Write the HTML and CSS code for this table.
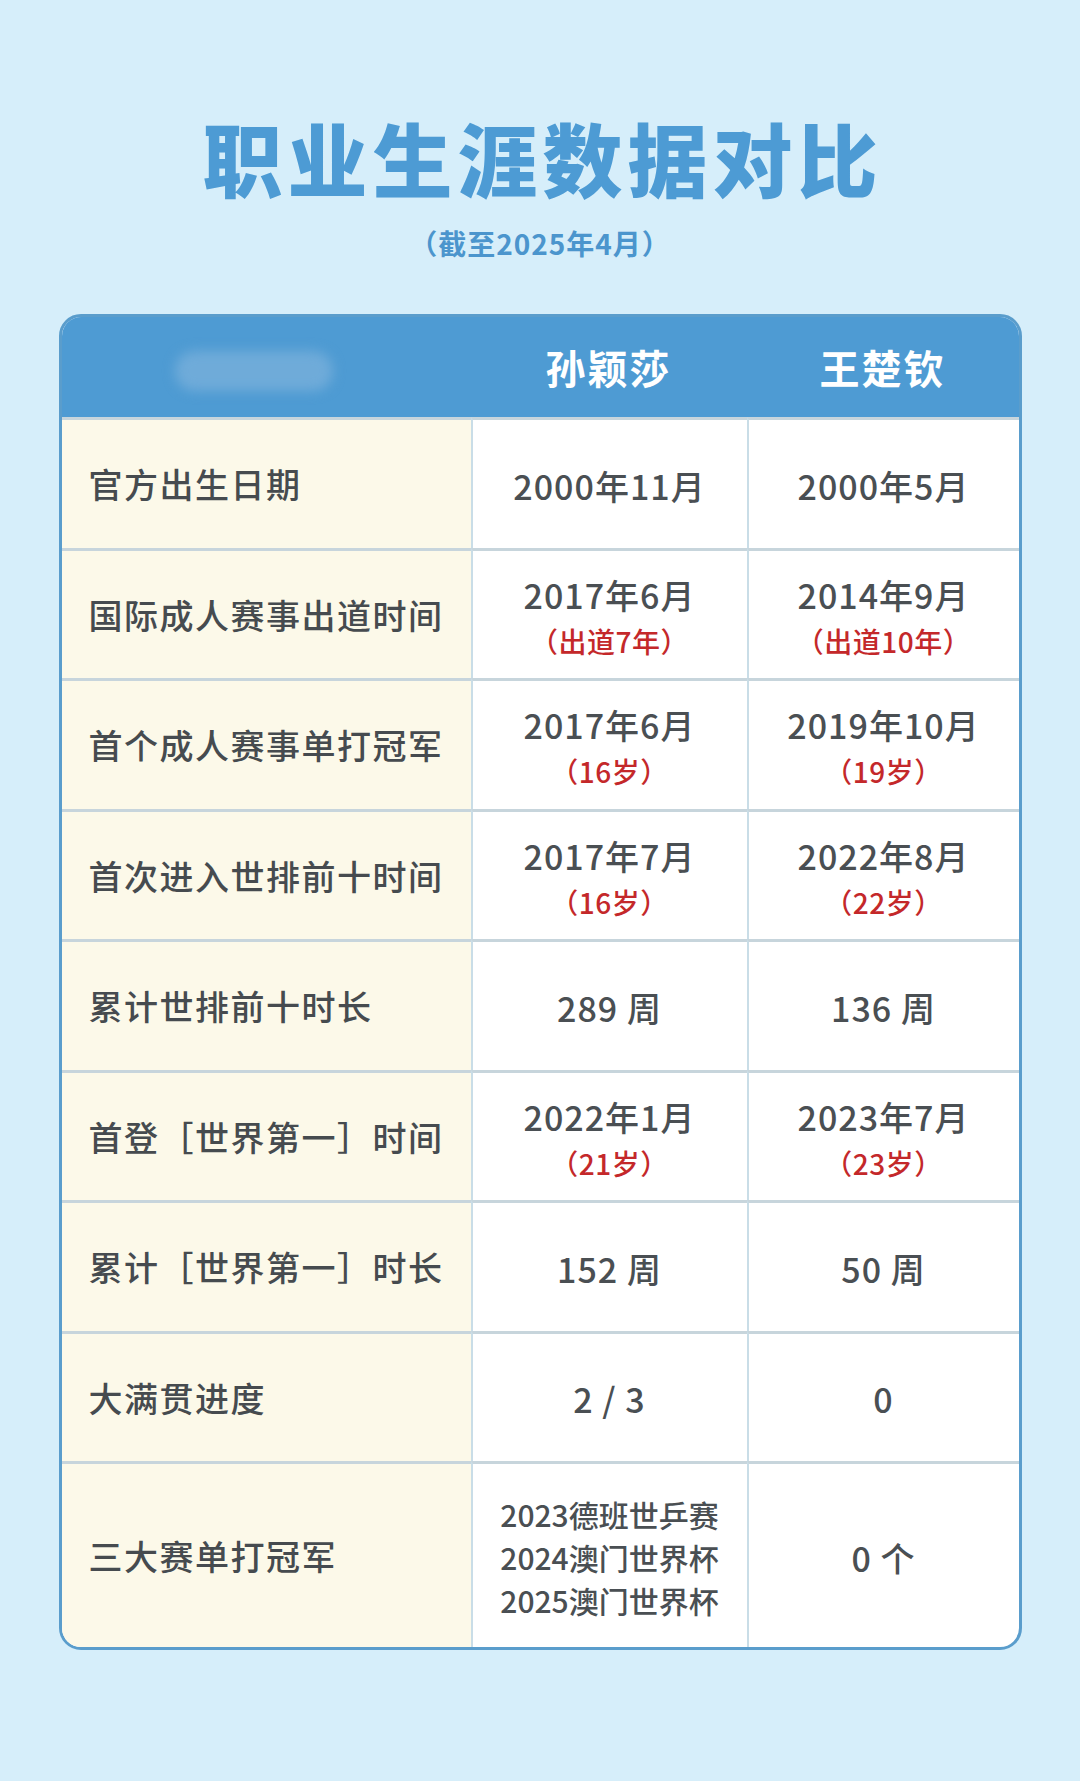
FILE: index.html
```html
<!DOCTYPE html>
<html lang="zh-CN">
<head>
<meta charset="utf-8">
<title>职业生涯数据对比</title>
<link rel="stylesheet" href="styles.css">
</head>
<body>
<main class="page">
  <h1 class="title">职业生涯数据对比</h1>
  <p class="subtitle">（截至2025年4月）</p>

  <section class="card">
    <div class="head head-label"><span class="blur"></span></div>
    <div class="head">孙颖莎</div>
    <div class="head">王楚钦</div>

    <div class="label">官方出生日期</div>
    <div class="val"><span class="main">2000年11月</span></div>
    <div class="val"><span class="main">2000年5月</span></div>

    <div class="label">国际成人赛事出道时间</div>
    <div class="val"><span class="main">2017年6月</span><span class="note">（出道7年）</span></div>
    <div class="val"><span class="main">2014年9月</span><span class="note">（出道10年）</span></div>

    <div class="label">首个成人赛事单打冠军</div>
    <div class="val"><span class="main">2017年6月</span><span class="note">（16岁）</span></div>
    <div class="val"><span class="main">2019年10月</span><span class="note">（19岁）</span></div>

    <div class="label">首次进入世排前十时间</div>
    <div class="val"><span class="main">2017年7月</span><span class="note">（16岁）</span></div>
    <div class="val"><span class="main">2022年8月</span><span class="note">（22岁）</span></div>

    <div class="label">累计世排前十时长</div>
    <div class="val"><span class="main">289 周</span></div>
    <div class="val"><span class="main">136 周</span></div>

    <div class="label">首登［世界第一］时间</div>
    <div class="val"><span class="main">2022年1月</span><span class="note">（21岁）</span></div>
    <div class="val"><span class="main">2023年7月</span><span class="note">（23岁）</span></div>

    <div class="label">累计［世界第一］时长</div>
    <div class="val"><span class="main">152 周</span></div>
    <div class="val"><span class="main">50 周</span></div>

    <div class="label">大满贯进度</div>
    <div class="val"><span class="main">2 / 3</span></div>
    <div class="val"><span class="main">0</span></div>

    <div class="label last">三大赛单打冠军</div>
    <div class="val last"><span class="list">2023德班世乒赛</span><span class="list">2024澳门世界杯</span><span class="list">2025澳门世界杯</span></div>
    <div class="val last"><span class="main">0 个</span></div>
  </section>
</main>
</body>
</html>
```

FILE: styles.css
```css
* { box-sizing: border-box; }

html, body {
  margin: 0;
  padding: 0;
}

body {
  background: #d6eefa;
  font-family: "Noto Sans CJK SC", "Noto Sans", sans-serif;
  color: #4a4f53;
}

.page {
  width: 1080px;
  height: 1781px;
  padding-top: 113px;
  display: flex;
  flex-direction: column;
  align-items: center;
}

.title {
  margin: 0;
  font-size: 80px;
  line-height: 86px;
  font-weight: 900;
  color: #4d9bd4;
  letter-spacing: 5px;
  padding-left: 5px;
}

.subtitle {
  margin: 28px 0 0;
  font-size: 28px;
  line-height: 32px;
  font-weight: 700;
  color: #4b95cd;
  letter-spacing: 1px;
}

.card {
  margin-top: 55px;
  width: 963px;
  border: 3px solid #5a9dcc;
  border-radius: 22px;
  overflow: hidden;
  background: #ffffff;
  display: grid;
  grid-template-columns: 409px 276px 1fr;
  grid-template-rows: 100px repeat(8, 130.5px) 186px;
}

.head {
  background: #4e9bd3;
  color: #ffffff;
  font-size: 40px;
  font-weight: 700;
  display: flex;
  align-items: center;
  justify-content: center;
  letter-spacing: 2px;
}

.head-label {
  position: relative;
}

.blur {
  position: absolute;
  left: 113px;
  top: 34px;
  width: 158px;
  height: 40px;
  border-radius: 20px;
  background: #6fabd9;
  filter: blur(6px);
}

.label {
  background: #fcf9e9;
  border-top: 3px solid #c7d5dc;
  display: flex;
  align-items: center;
  padding-left: 27px;
  font-size: 34px;
  font-weight: 500;
  letter-spacing: 1.5px;
  color: #464b4f;
}

.val {
  border-top: 3px solid #c7d5dc;
  border-left: 2px solid #c9dde7;
  padding-top: 4px;
  display: flex;
  flex-direction: column;
  align-items: center;
  justify-content: center;
}

.main {
  font-size: 34px;
  line-height: 44px;
  font-weight: 500;
  color: #4a4f53;
  letter-spacing: 1px;
}

.note {
  font-size: 28px;
  line-height: 38px;
  font-weight: 500;
  color: #c4282a;
  margin-top: 5px;
  letter-spacing: 0.5px;
}

.list {
  font-size: 30px;
  line-height: 43px;
  font-weight: 500;
  color: #4a4f53;
}
```
